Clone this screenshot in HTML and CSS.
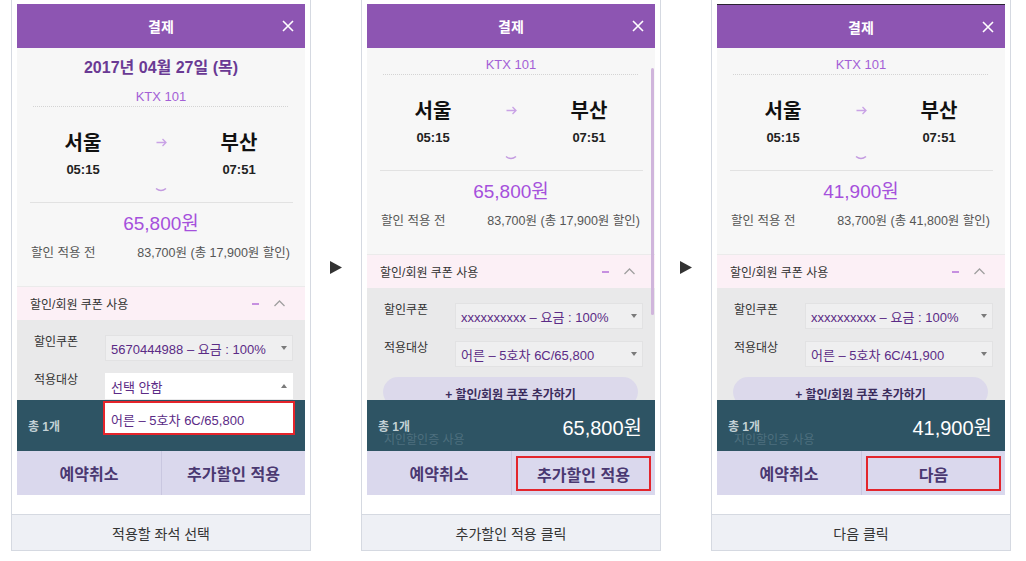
FILE: index.html
```html
<!DOCTYPE html>
<html lang="ko">
<head>
<meta charset="utf-8">
<title>결제 안내</title>
<link rel="stylesheet" href="styles.css">
</head>
<body>
<div class="page">

  <section class="panel">
    <div class="screen">
      <header class="hd">
        <span></span>
        <span class="hd-title">결제</span>
        <svg class="hd-close" viewBox="0 0 12 12"><path d="M1 1L11 11M11 1L1 11" stroke="#fff" stroke-width="1.6" fill="none"/></svg>
      </header>
      <div class="body">
        <div class="info">
          <div class="date">2017년 04월 27일 (목)</div>
          <div class="train train--after-date">KTX 101</div>
          <div class="dots"></div>
          <div class="route">
            <div class="stop"><div class="city">서울</div><div class="time">05:15</div></div>
            <svg class="route-arrow" viewBox="0 0 11 9"><path d="M0.5 4.5H10M6.5 1L10 4.5L6.5 8" stroke="#c9a2e6" stroke-width="1.3" fill="none"/></svg>
            <div class="stop"><div class="city">부산</div><div class="time">07:51</div></div>
          </div>
          <svg class="chev" viewBox="0 0 12 8"><path d="M1 2.5Q6 6.5 11 2.5" stroke="#c39ae0" stroke-width="1.5" fill="none"/></svg>
          <div class="rule"></div>
          <div class="price">65,800원</div>
          <div class="before"><span>할인 적용 전</span><span>83,700원 (총 17,900원 할인)</span></div>
        </div>
        <div class="cp-head">
          <span class="cp-title">할인/회원 쿠폰 사용</span>
          <span class="cp-minus"></span>
          <svg class="cp-toggle" viewBox="0 0 11 7"><path d="M0.5 6L5.5 1L10.5 6" stroke="#a0a0a0" stroke-width="1.3" fill="none"/></svg>
        </div>
        <div class="cp-body">
          <div class="field">
            <span class="label">할인쿠폰</span>
            <div class="select"><span>5670444988 – 요금 : 100%</span><i class="caret"></i></div>
          </div>
          <div class="field">
            <span class="label">적용대상</span>
            <div class="select select--open"><span>선택 안함</span><i class="caret caret--up"></i>
              <div class="option">어른 – 5호차 6C/65,800</div>
            </div>
          </div>
        </div>
      </div>
      <div class="total">
        <span class="total-count">총 1개</span>
      </div>
      <div class="actions">
        <div class="act">예약취소</div>
        <div class="act">추가할인 적용</div>
      </div>
    </div>
    <div class="caption">적용할 좌석 선택</div>
  </section>

  <div class="gap"><svg class="next" viewBox="0 0 12 13"><path d="M0 0L12 6.5L0 13Z" fill="#333"/></svg></div>

  <section class="panel">
    <div class="screen">
      <header class="hd">
        <span></span>
        <span class="hd-title">결제</span>
        <svg class="hd-close" viewBox="0 0 12 12"><path d="M1 1L11 11M11 1L1 11" stroke="#fff" stroke-width="1.6" fill="none"/></svg>
      </header>
      <div class="body body--clip">
        <div class="info info--scrolled">
          <div class="train">KTX 101</div>
          <div class="dots"></div>
          <div class="route">
            <div class="stop"><div class="city">서울</div><div class="time">05:15</div></div>
            <svg class="route-arrow" viewBox="0 0 11 9"><path d="M0.5 4.5H10M6.5 1L10 4.5L6.5 8" stroke="#c9a2e6" stroke-width="1.3" fill="none"/></svg>
            <div class="stop"><div class="city">부산</div><div class="time">07:51</div></div>
          </div>
          <svg class="chev" viewBox="0 0 12 8"><path d="M1 2.5Q6 6.5 11 2.5" stroke="#c39ae0" stroke-width="1.5" fill="none"/></svg>
          <div class="rule"></div>
          <div class="price">65,800원</div>
          <div class="before"><span>할인 적용 전</span><span>83,700원 (총 17,900원 할인)</span></div>
        </div>
        <div class="cp-head">
          <span class="cp-title">할인/회원 쿠폰 사용</span>
          <span class="cp-minus"></span>
          <svg class="cp-toggle" viewBox="0 0 11 7"><path d="M0.5 6L5.5 1L10.5 6" stroke="#a0a0a0" stroke-width="1.3" fill="none"/></svg>
        </div>
        <div class="cp-body">
          <div class="field">
            <span class="label">할인쿠폰</span>
            <div class="select"><span>xxxxxxxxxx – 요금 : 100%</span><i class="caret"></i></div>
          </div>
          <div class="field">
            <span class="label">적용대상</span>
            <div class="select"><span>어른 – 5호차 6C/65,800</span><i class="caret"></i></div>
          </div>
          <div class="add">+ 할인/회원 쿠폰 추가하기</div>
        </div>
      </div>
      <div class="scrollbar"></div>
      <div class="total">
        <span class="total-count">총 1개</span>
        <span class="total-ghost">지인할인증 사용</span>
        <span class="total-price">65,800원</span>
      </div>
      <div class="actions">
        <div class="act">예약취소</div>
        <div class="act act--hl"><span>추가할인 적용</span></div>
      </div>
    </div>
    <div class="caption">추가할인 적용 클릭</div>
  </section>

  <div class="gap"><svg class="next" viewBox="0 0 12 13"><path d="M0 0L12 6.5L0 13Z" fill="#333"/></svg></div>

  <section class="panel">
    <div class="screen screen--edge">
      <header class="hd">
        <span></span>
        <span class="hd-title">결제</span>
        <svg class="hd-close" viewBox="0 0 12 12"><path d="M1 1L11 11M11 1L1 11" stroke="#fff" stroke-width="1.6" fill="none"/></svg>
      </header>
      <div class="body body--clip">
        <div class="info info--scrolled">
          <div class="train">KTX 101</div>
          <div class="dots"></div>
          <div class="route">
            <div class="stop"><div class="city">서울</div><div class="time">05:15</div></div>
            <svg class="route-arrow" viewBox="0 0 11 9"><path d="M0.5 4.5H10M6.5 1L10 4.5L6.5 8" stroke="#c9a2e6" stroke-width="1.3" fill="none"/></svg>
            <div class="stop"><div class="city">부산</div><div class="time">07:51</div></div>
          </div>
          <svg class="chev" viewBox="0 0 12 8"><path d="M1 2.5Q6 6.5 11 2.5" stroke="#c39ae0" stroke-width="1.5" fill="none"/></svg>
          <div class="rule"></div>
          <div class="price">41,900원</div>
          <div class="before"><span>할인 적용 전</span><span>83,700원 (총 41,800원 할인)</span></div>
        </div>
        <div class="cp-head">
          <span class="cp-title">할인/회원 쿠폰 사용</span>
          <span class="cp-minus"></span>
          <svg class="cp-toggle" viewBox="0 0 11 7"><path d="M0.5 6L5.5 1L10.5 6" stroke="#a0a0a0" stroke-width="1.3" fill="none"/></svg>
        </div>
        <div class="cp-body">
          <div class="field">
            <span class="label">할인쿠폰</span>
            <div class="select"><span>xxxxxxxxxx – 요금 : 100%</span><i class="caret"></i></div>
          </div>
          <div class="field">
            <span class="label">적용대상</span>
            <div class="select"><span>어른 – 5호차 6C/41,900</span><i class="caret"></i></div>
          </div>
          <div class="add">+ 할인/회원 쿠폰 추가하기</div>
        </div>
      </div>
      <div class="total">
        <span class="total-count">총 1개</span>
        <span class="total-ghost">지인할인증 사용</span>
        <span class="total-price">41,900원</span>
      </div>
      <div class="actions">
        <div class="act">예약취소</div>
        <div class="act act--hl"><span>다음</span></div>
      </div>
    </div>
    <div class="caption">다음 클릭</div>
  </section>

</div>
</body>
</html>
```

FILE: styles.css
```css
* { box-sizing: border-box; margin: 0; padding: 0; }
body {
  margin: 0;
  background: #fff;
  font-family: "Liberation Sans", "Noto Sans CJK KR", sans-serif;
  color: #333;
}
.page {
  display: flex;
  align-items: flex-start;
  padding-left: 11px;
  width: 1026px;
  height: 561px;
  overflow: hidden;
}
.panel {
  flex: none;
  width: 300px;
  border: 1px solid #d5d9e1;
  border-top: 0;
  padding: 4px 5px 0;
}
.gap {
  flex: none;
  width: 50px;
  display: flex;
  justify-content: center;
  padding-top: 261px;
}
.next { width: 12px; height: 13px; display: block; }
.caption {
  margin: 19px -5px 0;
  border-top: 1px solid #d5d9e1;
  background: #eef0f5;
  height: 36px;
  display: flex;
  align-items: center;
  justify-content: center;
  font-family: "Noto Sans CJK KR", sans-serif;
  font-size: 14px;
  line-height: 16px;
  color: #333;
}

.screen {
  position: relative;
  height: 491px;
  display: flex;
  flex-direction: column;
  background: #f7f7f7;
}
.hd {
  flex: none;
  height: 44px;
  background: #8d55b2;
  display: grid;
  grid-template-columns: 1fr auto 1fr;
  align-items: center;
}
.screen--edge .hd { border-top: 1px solid #2b2233; }
.hd-title { color: #fff; font-size: 14px; font-weight: 700; }
.hd-close { justify-self: end; margin-right: 11px; width: 12px; height: 12px; display: block; }

.body {
  flex: 1;
  min-height: 0;
  display: flex;
  flex-direction: column;
}
.body--clip { overflow: hidden; }

.info {
  flex: none;
  padding: 8px 0 24px;
  border-bottom: 1px solid #ebebeb;
  text-align: center;
}
.info--scrolled { padding-top: 8px; }
.date { font-size: 16px; line-height: 24px; color: #6a3a94; font-weight: 700; }
.train { font-size: 13px; line-height: 18px; color: #a35fd6; font-weight: 400; }
.train--after-date { margin-top: 8px; }
.dots { margin: 0 17px 0 16px; border-top: 1px dotted #d4d4d4; }
.route {
  display: grid;
  grid-template-columns: 1fr 24px 1fr;
  align-items: start;
  margin-top: 23px;
}
.city { font-size: 20px; line-height: 26px; font-weight: 700; color: #111; }
.time { margin-top: 5px; font-size: 13px; line-height: 18px; font-weight: 700; color: #222; }
.route-arrow { display: block; width: 11px; height: 9px; margin: 8px auto 0; }
.chev { display: block; width: 12px; height: 8px; margin: 7px auto 0; }
.rule { margin: 8px 12px 0 13px; border-top: 1px solid #e2e2e2; }
.price { margin-top: 8px; font-size: 19px; line-height: 26px; color: #a550dc; font-weight: 400; }
.before {
  margin-top: 7px;
  display: flex;
  justify-content: space-between;
  padding: 0 15px 0 14px;
  font-size: 12.5px;
  line-height: 18px;
  color: #555;
}

.cp-head {
  flex: none;
  height: 33px;
  background: #fcf0f6;
  display: flex;
  align-items: center;
  padding: 0 20px 0 13px;
  font-size: 12px;
  color: #333;
}
.cp-title { flex: 1; }
.cp-minus { width: 7px; height: 2px; background: #c690e0; margin-right: 15px; }
.cp-toggle { display: block; width: 11px; height: 7px; }

.cp-body {
  flex: 1 0 auto;
  background: #e9e9ea;
  padding: 15px 12px 0 17px;
  display: flex;
  flex-direction: column;
  gap: 12px;
}
.field { display: flex; align-items: flex-start; }
.label { flex: none; width: 71px; font-size: 12px; line-height: 14px; color: #333; }
.select {
  position: relative;
  flex: 1;
  height: 26px;
  border: 1px solid #e2e2e3;
  background: #efeff0;
  display: flex;
  align-items: center;
  justify-content: space-between;
  padding: 0 5px;
  font-size: 13px;
  color: #5b2b86;
}
.select--open { background: #fff; border-color: #fff; }
.caret {
  width: 0; height: 0;
  border-left: 3.5px solid transparent;
  border-right: 3.5px solid transparent;
  border-top: 4px solid #7a7a7a;
}
.caret--up { border-top: 0; border-bottom: 4px solid #7a7a7a; }
.option {
  position: absolute;
  top: 27px;
  left: -3px;
  right: -3px;
  height: 34px;
  border: 2px solid #e5242b;
  background: #fff;
  display: flex;
  align-items: center;
  padding: 2px 0 0 6px;
  z-index: 2;
  font-size: 13px;
  color: #5b2b86;
}
.add {
  flex: none;
  margin: -2px 5px 0 -1px;
  height: 30px;
  border-radius: 15px;
  background: #dcd9eb;
  display: flex;
  align-items: center;
  justify-content: center;
  padding-top: 2px;
  font-size: 12px;
  font-weight: 700;
  color: #3b2c5c;
}
.scrollbar {
  position: absolute;
  right: 1px;
  top: 64px;
  width: 3px;
  height: 247px;
  background: #d0b5dc;
  border-radius: 2px;
}

.total {
  position: relative;
  flex: none;
  height: 51px;
  background: #2e5464;
  display: flex;
  align-items: center;
  justify-content: space-between;
  padding: 2px 13px 0 11px;
}
.total-count { position: relative; z-index: 1; font-size: 12px; line-height: 12px; font-weight: 700; color: #c3d1d6; }
.total-ghost { position: absolute; left: 17px; top: 34px; font-size: 12px; line-height: 12px; color: #4d6f7e; }
.total-price { font-size: 20px; font-weight: 400; color: #fff; }

.actions {
  flex: none;
  height: 44px;
  display: grid;
  grid-template-columns: 144px 1fr;
  background: #dad8ed;
}
.act {
  display: flex;
  align-items: center;
  justify-content: center;
  font-size: 16px;
  font-weight: 700;
  color: #4a3871;
}
.act + .act { border-left: 1px solid #c9c7e0; }
.act--hl { padding: 5px 4px 4px 4px; }
.act--hl span {
  flex: 1;
  align-self: stretch;
  border: 2px solid #e3252c;
  display: flex;
  align-items: center;
  justify-content: center;
}
```
